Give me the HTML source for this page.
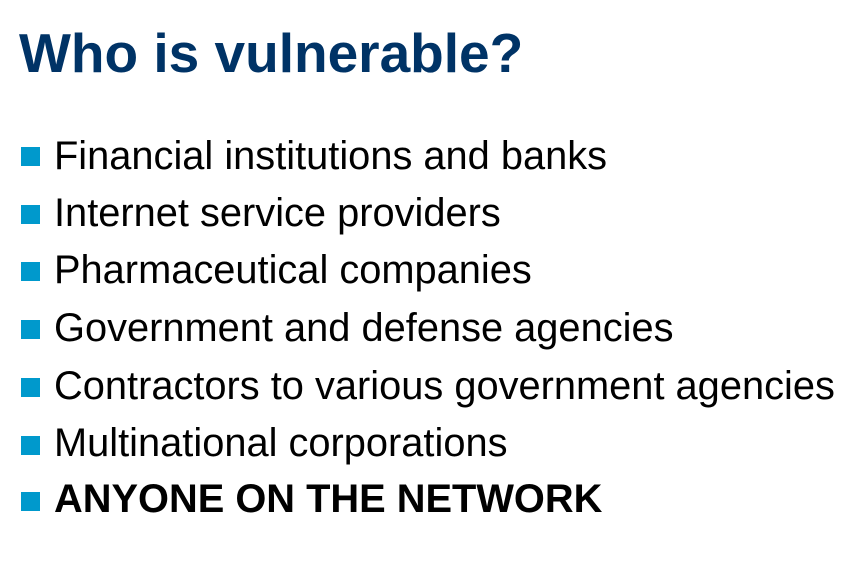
<!DOCTYPE html>
<html><head><style>
body{margin:0;width:865px;height:584px;background:#fff;overflow:hidden;font-family:"Liberation Sans",Arial,sans-serif;position:relative}
h1{position:absolute;left:19px;top:53px;margin:0;font-size:55px;font-weight:bold;color:#003366;line-height:0;white-space:nowrap}
.l{position:absolute;left:54px;font-size:39.8px;color:#000;line-height:0;white-space:nowrap}
.s{position:absolute;left:21px;width:19px;height:19px;background:#0099cc}
</style></head><body>
<h1>Who is vulnerable?</h1>
<div class="s" style="top:147px"></div><div class="l" style="top:156px">Financial institutions and banks</div>
<div class="s" style="top:205px"></div><div class="l" style="top:213px">Internet service providers</div>
<div class="s" style="top:262px"></div><div class="l" style="top:270px">Pharmaceutical companies</div>
<div class="s" style="top:320px"></div><div class="l" style="top:328px">Government and defense agencies</div>
<div class="s" style="top:378px"></div><div class="l" style="top:386px">Contractors to various government agencies</div>
<div class="s" style="top:436px"></div><div class="l" style="top:443px">Multinational corporations</div>
<div class="s" style="top:492px"></div><div class="l" style="top:499px;font-weight:bold">ANYONE ON THE NETWORK</div>
</body></html>
